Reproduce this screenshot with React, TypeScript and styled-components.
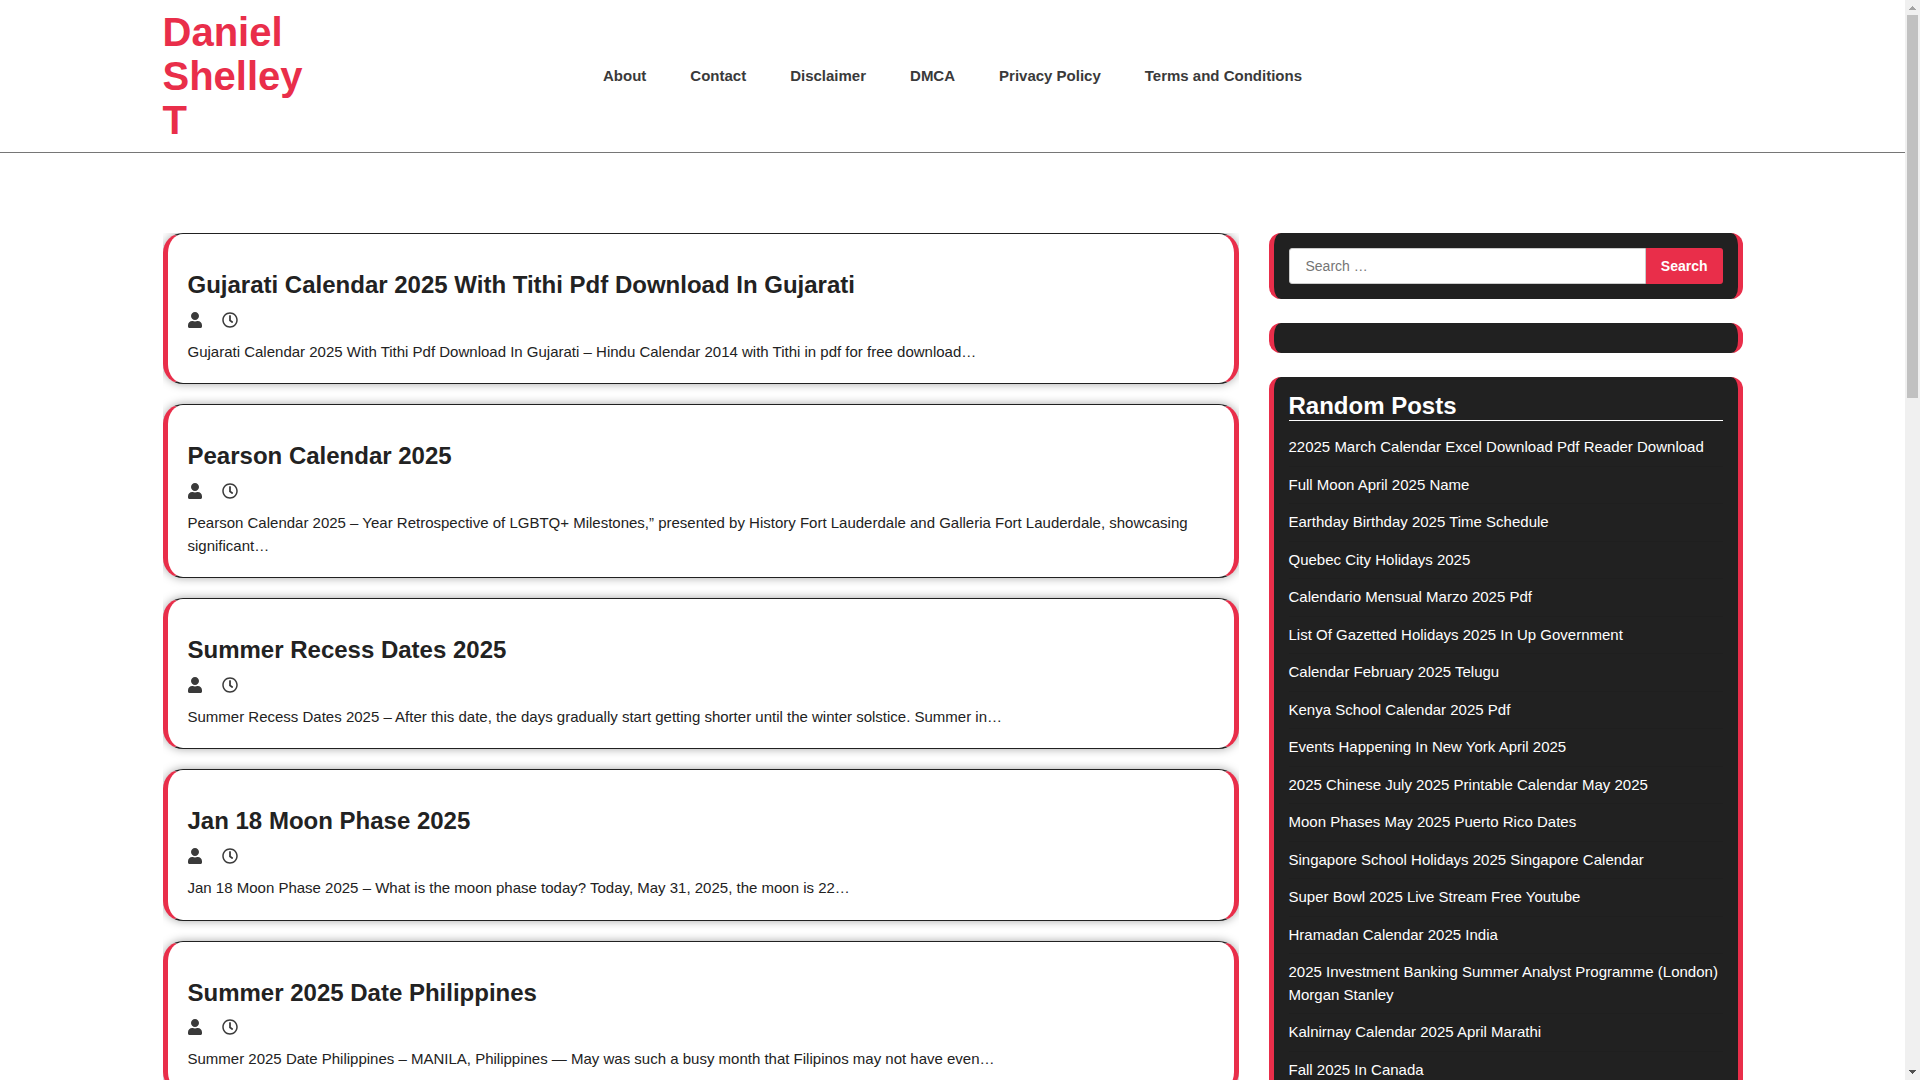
import React from "react";
import styled, { createGlobalStyle } from "styled-components";
import { FaRegClock, FaUser } from "react-icons/fa";

const color = {
  accent: "#e92e4a",
  dark: "#212121",
  text: "#222222",
  muted: "#3a3a3a",
};

const GlobalStyle = createGlobalStyle`
  *, *::before, *::after { box-sizing: border-box; }
  body {
    margin: 0;
    background: #ffffff;
    color: ${color.text};
    font: 15px/1.5 "Liberation Sans", Arial, sans-serif;
  }
  a { color: inherit; text-decoration: none; }
`;

const Shell = styled.div`
  display: grid;
  grid-template-columns: minmax(0, 1fr) 15px;
  height: 100vh;
  overflow: hidden;
`;

const Page = styled.div`
  min-width: 0;
  height: 100vh;
  overflow: hidden;
`;

const Container = styled.div`
  width: 100%;
  max-width: 1580px;
  margin: 0 auto;
`;

const Header = styled.header`
  padding: 10px 0;
  border-bottom: 1px solid #767676;
`;

const HeaderRow = styled(Container)`
  display: grid;
  grid-template-columns: 1fr 8fr 1fr;
  align-items: center;
`;

const SiteTitle = styled.h1`
  margin: 0;
  font-size: 40px;
  line-height: 44px;
  color: ${color.accent};
`;

const Menu = styled.ul`
  display: flex;
  justify-content: center;
  gap: 44px;
  margin: 0;
  padding: 0;
  list-style: none;
  font-weight: 700;
  color: ${color.muted};
`;

const Columns = styled(Container)`
  display: flex;
  align-items: flex-start;
  gap: 30px;
  margin-top: 80px;
`;

const Posts = styled.main`
  flex: 1;
  min-width: 0;
  display: flex;
  flex-direction: column;
  gap: 20px;
  overflow: hidden;
`;

const Card = styled.article`
  padding: 20px;
  border: 1px solid ${color.dark};
  border-left: 5px solid ${color.accent};
  border-right: 5px solid ${color.accent};
  border-radius: 20px;
  background: #ffffff;
  box-shadow: 0 0 10px rgba(0, 0, 0, 0.35);
`;

const CardTitle = styled.h2`
  margin: 17px 0 8px;
  font-size: 24px;
  line-height: 1.2;
`;

const Meta = styled.div`
  display: flex;
  align-items: center;
  gap: 20px;
  height: 24px;
  margin-bottom: 9px;
  color: ${color.muted};
`;

const UserIcon = styled(FaUser)`
  width: 14px;
  height: 16px;
`;

const ClockIcon = styled(FaRegClock)`
  width: 16px;
  height: 16px;
`;

const Excerpt = styled.p`
  margin: 0;
`;

const Sidebar = styled.aside`
  flex: 0 0 30%;
  display: flex;
  flex-direction: column;
  gap: 24px;
`;

const Widget = styled.section`
  padding: 15px;
  border: solid ${color.accent};
  border-width: 0 5px;
  border-radius: 12px;
  background: ${color.dark};
  color: #ffffff;
`;

const SearchForm = styled.form`
  display: flex;
  height: 36px;
`;

const SearchLabel = styled.label`
  flex: 1;
  display: flex;
  min-width: 0;
`;

const SearchInput = styled.input`
  width: 100%;
  padding: 0 16px;
  border: 1px solid #cccccc;
  border-radius: 3px 0 0 3px;
  background: #ffffff;
  font: inherit;
  font-size: 14px;
  &::placeholder { color: #757575; }
`;

const SearchButton = styled.button`
  padding: 0 15px;
  border: 0;
  border-radius: 0 3px 3px 0;
  background: ${color.accent};
  color: #ffffff;
  font: inherit;
  font-size: 14px;
  font-weight: 700;
`;

const WidgetTitle = styled.h2`
  margin: 0 0 8px;
  border-bottom: 1px solid #ffffff;
  font-size: 24px;
  line-height: 28px;
`;

const LinkList = styled.ul`
  margin: 0;
  padding: 0;
  list-style: none;
`;

const LinkItem = styled.li`
  padding: 7px 0;
  border-bottom: 1px solid #1f1f1f;
`;

const ScrollTrack = styled.div`
  display: flex;
  flex-direction: column;
  height: 100vh;
  background: #f0f0f0;
`;

const ScrollArrow = styled.svg`
  display: block;
  width: 15px;
  height: 15px;
`;

const ScrollLane = styled.div`
  flex: 1;
  padding: 0 2px;
`;

const ScrollThumb = styled.div`
  height: 36.5%;
  background: #c1c1c1;
`;

const menu = ["About", "Contact", "Disclaimer", "DMCA", "Privacy Policy", "Terms and Conditions"];

const posts = [
  {
    title: "Gujarati Calendar 2025 With Tithi Pdf Download In Gujarati",
    excerpt:
      "Gujarati Calendar 2025 With Tithi Pdf Download In Gujarati – Hindu Calendar 2014 with Tithi in pdf for free download…",
  },
  {
    title: "Pearson Calendar 2025",
    excerpt:
      "Pearson Calendar 2025 – Year Retrospective of LGBTQ+ Milestones,” presented by History Fort Lauderdale and Galleria Fort Lauderdale, showcasing significant…",
  },
  {
    title: "Summer Recess Dates 2025",
    excerpt:
      "Summer Recess Dates 2025 – After this date, the days gradually start getting shorter until the winter solstice. Summer in…",
  },
  {
    title: "Jan 18 Moon Phase 2025",
    excerpt: "Jan 18 Moon Phase 2025 – What is the moon phase today? Today, May 31, 2025, the moon is 22…",
  },
  {
    title: "Summer 2025 Date Philippines",
    excerpt:
      "Summer 2025 Date Philippines – MANILA, Philippines — May was such a busy month that Filipinos may not have even…",
  },
];

const randomPosts = [
  "22025 March Calendar Excel Download Pdf Reader Download",
  "Full Moon April 2025 Name",
  "Earthday Birthday 2025 Time Schedule",
  "Quebec City Holidays 2025",
  "Calendario Mensual Marzo 2025 Pdf",
  "List Of Gazetted Holidays 2025 In Up Government",
  "Calendar February 2025 Telugu",
  "Kenya School Calendar 2025 Pdf",
  "Events Happening In New York April 2025",
  "2025 Chinese July 2025 Printable Calendar May 2025",
  "Moon Phases May 2025 Puerto Rico Dates",
  "Singapore School Holidays 2025 Singapore Calendar",
  "Super Bowl 2025 Live Stream Free Youtube",
  "Hramadan Calendar 2025 India",
  "2025 Investment Banking Summer Analyst Programme (London) Morgan Stanley",
  "Kalnirnay Calendar 2025 April Marathi",
  "Fall 2025 In Canada",
];

export default function App() {
  return (
    <Shell>
      <GlobalStyle />
      <Page>
        <Header>
          <HeaderRow>
            <SiteTitle>
              <a href="#home">Daniel Shelley T</a>
            </SiteTitle>
            <nav aria-label="Primary">
              <Menu>
                {menu.map((item) => (
                  <li key={item}>
                    <a href="#page">{item}</a>
                  </li>
                ))}
              </Menu>
            </nav>
          </HeaderRow>
        </Header>
        <Columns>
          <Posts>
            {posts.map((post) => (
              <Card key={post.title}>
                <CardTitle>
                  <a href="#post">{post.title}</a>
                </CardTitle>
                <Meta>
                  <UserIcon aria-hidden="true" />
                  <ClockIcon aria-hidden="true" />
                </Meta>
                <Excerpt>{post.excerpt}</Excerpt>
              </Card>
            ))}
          </Posts>
          <Sidebar>
            <Widget>
              <SearchForm role="search" onSubmit={(event) => event.preventDefault()}>
                <SearchLabel>
                  <SearchInput type="search" aria-label="Search for" placeholder="Search …" />
                </SearchLabel>
                <SearchButton type="submit">Search</SearchButton>
              </SearchForm>
            </Widget>
            <Widget />
            <Widget>
              <WidgetTitle>Random Posts</WidgetTitle>
              <LinkList>
                {randomPosts.map((title) => (
                  <LinkItem key={title}>
                    <a href="#post">{title}</a>
                  </LinkItem>
                ))}
              </LinkList>
            </Widget>
          </Sidebar>
        </Columns>
      </Page>
      <ScrollTrack aria-hidden="true">
        <ScrollArrow viewBox="0 0 15 15" shapeRendering="crispEdges">
          <path d="M7 6h1v1h1v1h1v1h1v1H4V9h1V8h1V7h1z" fill="#a3a3a3" />
        </ScrollArrow>
        <ScrollLane>
          <ScrollThumb />
        </ScrollLane>
        <ScrollArrow viewBox="0 0 15 15" shapeRendering="crispEdges">
          <path d="M4 5h7v1h-1v1H9v1H8v1H7V8H6V7H5V6H4z" fill="#505050" />
        </ScrollArrow>
      </ScrollTrack>
    </Shell>
  );
}
